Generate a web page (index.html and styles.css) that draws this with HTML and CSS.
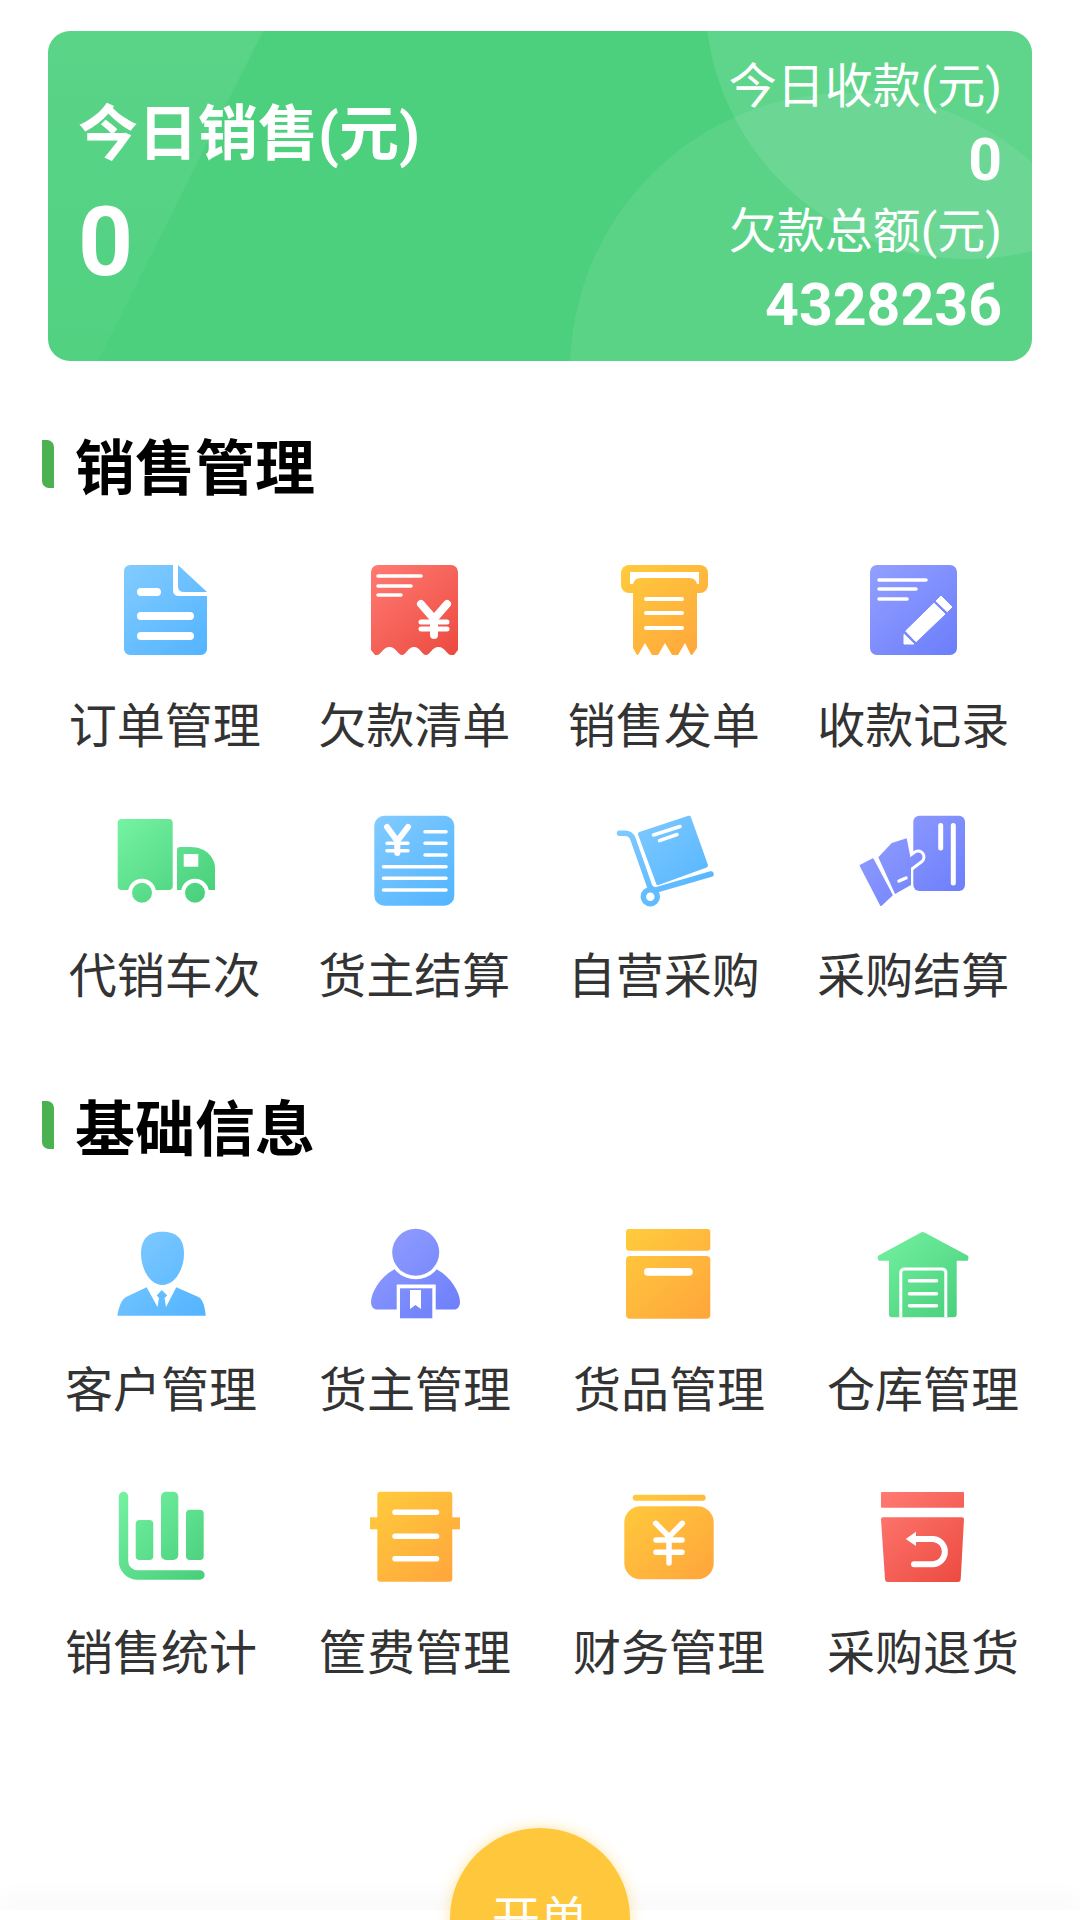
FILE: index.html
```html
<!DOCTYPE html>
<html lang="zh-CN">
<head>
<meta charset="utf-8">
<title>首页</title>
<link rel="stylesheet" href="styles.css">
</head>
<body>
<svg class="defs" width="0" height="0" aria-hidden="true">
  <defs>
    <linearGradient id="blue" gradientUnits="userSpaceOnUse" x1="10" y1="5" x2="90" y2="95"><stop offset="0" stop-color="#82CBFF"/><stop offset="1" stop-color="#52B4FF"/></linearGradient>
    <linearGradient id="red" gradientUnits="userSpaceOnUse" x1="10" y1="5" x2="90" y2="95"><stop offset="0" stop-color="#FF7A72"/><stop offset="1" stop-color="#EC4A40"/></linearGradient>
    <linearGradient id="orange" gradientUnits="userSpaceOnUse" x1="10" y1="5" x2="90" y2="95"><stop offset="0" stop-color="#FFCB3C"/><stop offset="1" stop-color="#FFA53C"/></linearGradient>
    <linearGradient id="indigo" gradientUnits="userSpaceOnUse" x1="10" y1="5" x2="90" y2="95"><stop offset="0" stop-color="#929FFF"/><stop offset="1" stop-color="#6C7EFB"/></linearGradient>
    <linearGradient id="green" gradientUnits="userSpaceOnUse" x1="10" y1="5" x2="90" y2="95"><stop offset="0" stop-color="#74F2A2"/><stop offset="1" stop-color="#48CE7A"/></linearGradient>
    <linearGradient id="band" x1="0" y1="0" x2="0" y2="1"><stop offset="0" stop-color="#fff" stop-opacity=".08"/><stop offset="1" stop-color="#fff" stop-opacity=".03"/></linearGradient>
  </defs>
</svg>
<div class="page">
  <section class="card">
    <svg class="card-bg" viewBox="0 0 984 330" aria-hidden="true">
      <path d="M0 0H215L50 330H0Z" fill="url(#band)"/>
      <circle cx="800" cy="340" r="278" fill="#fff" fill-opacity=".08"/>
      <circle cx="919" cy="-34" r="262" fill="#fff" fill-opacity=".11"/>
    </svg>
    <div class="card-left">
      <div class="card-title">今日销售(元)</div>
      <div class="card-big">0</div>
    </div>
    <div class="card-right">
      <div class="card-line">今日收款(元)</div>
      <div class="card-num">0</div>
      <div class="card-line">欠款总额(元)</div>
      <div class="card-num">4328236</div>
    </div>
  </section>

  <h2 class="heading heading-first"><span class="heading-bar"></span>销售管理</h2>
  <div class="grid grid-sales">
    <a class="item">
      <svg class="icon" viewBox="0 0 100 100"><path fill="url(#blue)" d="M14 5H57V30q0 6 6 6H91V89a6 6 0 0 1-6 6H14a6 6 0 0 1-6-6V11a6 6 0 0 1 6-6Z"/><path fill="url(#blue)" d="M62 5 91 32H68q-6 0-6-6Z"/><g fill="none" stroke="#fff" stroke-width="8" stroke-linecap="round"><path d="M25 32H41M25 56H74M25 76H74"/></g></svg>
      <span class="label">订单管理</span>
    </a>
    <a class="item">
      <svg class="icon" viewBox="0 0 100 100"><path fill="url(#red)" d="M13 5H86a7 7 0 0 1 7 7V90L89 95H86C82 95 80 87 73.500 87 67 87 65 95 61 95 57 95 55 87 49 87 43 87 41 95 37 95 33 95 31 87 24.500 87 18 87 16 95 12 95H10L6 90V12a7 7 0 0 1 7-7Z"/><g fill="none" stroke="#fff" stroke-width="3.500" stroke-linecap="round"><path d="M13 16H56M13 26H46M13 35H36"/><path stroke-width="5" d="M56 62H82M56 69H82"/><path stroke-width="8" d="M56 44 69 59 82 44M69 59V75"/></g></svg>
      <span class="label">欠款清单</span>
    </a>
    <a class="item">
      <svg class="icon" viewBox="0 0 100 100"><rect x="6" y="5" width="87" height="28" rx="8" fill="url(#orange)"/><path fill="#fff" d="M15 12H84V24H15Z"/><path fill="url(#orange)" d="M26 18H74q8 0 8 8V88L77 95H76L70 83 63 95H57L50 83 43 95H37L30 83 23 95H22L18 88V26q0-8 8-8Z"/><g fill="none" stroke="#fff" stroke-width="4" stroke-linecap="round"><path d="M31 39H67M31 53H67M31 68H67"/></g></svg>
      <span class="label">销售发单</span>
    </a>
    <a class="item">
      <svg class="icon" viewBox="0 0 100 100"><rect x="6" y="5" width="87" height="90" rx="7" fill="url(#indigo)"/><g fill="none" stroke="#fff" stroke-width="3.500" stroke-linecap="round"><path d="M15 20H62M15 29H52M15 39H43"/></g><g fill="#fff" stroke="#fff" stroke-width="1" stroke-linejoin="round"><path d="M77 36 88 47 83.300 51.700 72 41Z"/><path d="M70 43.300 81 54 52 81.700 41.700 71Z"/><path d="M40 74.300 50 84H40Z"/></g></svg>
      <span class="label">收款记录</span>
    </a>
    <a class="item">
      <svg class="icon" viewBox="0 0 100 100"><rect x="1.700" y="9" width="55" height="71" rx="4" fill="url(#green)"/><path fill="url(#green)" d="M61 40q0-3 3-3H75C90 37 99 48 99 58V80H61Z"/><rect x="67.700" y="44" width="14.600" height="12.700" fill="#fff"/><circle cx="26" cy="82.700" r="14" fill="#fff"/><circle cx="79" cy="82.700" r="14" fill="#fff"/><circle cx="26" cy="82.700" r="10" fill="url(#green)"/><circle cx="79" cy="82.700" r="10" fill="url(#green)"/></svg>
      <span class="label">代销车次</span>
    </a>
    <a class="item">
      <svg class="icon" viewBox="0 0 100 100"><rect x="9.300" y="5.700" width="80" height="90" rx="10" fill="url(#blue)"/><g fill="none" stroke="#fff" stroke-width="3.500" stroke-linecap="round"><path d="M60 21.700H81M60 33.300H81M60 45H81M18.500 56.700H81M18.500 68.300H81M18.500 80H81"/><path d="M22 33.300H43M22 40.700H43"/><path stroke-width="6" d="M22 17 32.300 31 43 17M32.300 31V43"/></g></svg>
      <span class="label">货主结算</span>
    </a>
    <a class="item">
      <svg class="icon" viewBox="0 0 100 100"><path fill="url(#blue)" stroke="url(#blue)" stroke-width="4" stroke-linejoin="round" d="M25 24 74 7.700 91 55.500 43 73Z"/><g fill="none" stroke="url(#blue)" stroke-width="5.500" stroke-linecap="round" stroke-linejoin="round"><path d="M4.500 23.300H10Q16 23.300 18 29L34.500 76Q37 81 42.700 79.500L96 64"/><circle cx="35.300" cy="86.700" r="7"/></g><g fill="none" stroke="#fff" stroke-width="3.500" stroke-linecap="round"><path d="M38.500 25 65 16.500M44.500 30.700 62 24.500"/></g></svg>
      <span class="label">自营采购</span>
    </a>
    <a class="item">
      <svg class="icon" viewBox="0 0 100 100"><rect x="49.300" y="5.700" width="51.700" height="75.300" rx="6" fill="url(#indigo)"/><g fill="none" stroke="#fff" stroke-width="5" stroke-linecap="round"><path d="M76.700 15.500V38M89.300 15.500V73"/></g><path fill="none" stroke="#fff" stroke-width="15" stroke-linecap="round" d="M42 56 54 47"/><path fill="url(#indigo)" d="M14.300 47.300 27.700 33 42.700 28.300 45 40 47 50 47 75 31 84Z"/><path fill="none" stroke="url(#indigo)" stroke-width="9" stroke-linecap="round" d="M42 56 54 47"/><path fill="none" stroke="#fff" stroke-width="3.500" stroke-linecap="round" d="M35 71 42 68"/><path fill="url(#indigo)" stroke="url(#indigo)" stroke-width="2" stroke-linejoin="round" d="M-3.300 55.700 8.700 49.300 27.700 85 17 95Z"/></svg>
      <span class="label">采购结算</span>
    </a>
  </div>

  <h2 class="heading heading-second"><span class="heading-bar"></span>基础信息</h2>
  <div class="grid grid-base">
    <a class="item">
      <svg class="icon" viewBox="0 0 100 100"><path fill="url(#blue)" d="M30 30C30 14 38 7.700 51.300 7.700 65 7.700 73 14 73 30 73 45 64 61 51.300 61 39 61 30 45 30 30Z"/><path fill="url(#blue)" d="M6.300 91.700C8 83 10 76 15 73L35.700 63.300 46.500 83 48 74 45.700 71.500 50.700 66 56.300 71.500 53.500 74 55 83 65.300 63.300 88 73.300C92 76 94 83 94.700 91.700Z"/></svg>
      <span class="label">客户管理</span>
    </a>
    <a class="item">
      <svg class="icon" viewBox="0 0 100 100"><path fill="url(#indigo)" d="M30 45C16 52 6 68 6 78 6 83 9 85.500 12 85.500H89C92 85.500 95 83 95 78 95 68 85 52 71 45Z"/><circle cx="50.700" cy="28.300" r="27" fill="#fff"/><circle cx="50.700" cy="28.300" r="23.500" fill="url(#indigo)"/><rect x="31.700" y="60.500" width="39" height="39" fill="#fff"/><rect x="35" y="64.300" width="32.300" height="30" fill="url(#indigo)"/><path fill="#fff" d="M45 66H56V85L50.500 81 45 85Z"/></svg>
      <span class="label">货主管理</span>
    </a>
    <a class="item">
      <svg class="icon" viewBox="0 0 100 100"><rect x="7" y="5" width="84.300" height="21.700" rx="3" fill="url(#orange)"/><rect x="7" y="32" width="84.300" height="62.700" rx="4" fill="url(#orange)"/><rect x="25" y="44" width="48.700" height="7.700" rx="3.800" fill="#fff"/></svg>
      <span class="label">货品管理</span>
    </a>
    <a class="item">
      <svg class="icon" viewBox="0 0 100 100"><path fill="url(#green)" d="M48 8.500Q49.700 7.300 51.500 8.500L94.500 31.500Q96.500 33 94.500 36.700H83.700V90.300a3 3 0 0 1-3 3H19a3 3 0 0 1-3-3V36.700H6Q3.500 34 5.500 31.500Z"/><g fill="none" stroke="#fff" stroke-linecap="round"><path stroke-width="3" stroke-linecap="butt" d="M27.800 93.300V49q0-4 4-4H68.800q4 0 4 4V93.300"/><path stroke-width="3.500" d="M36.500 56.700H63.500M36.500 69.700H63.500M36.500 81.700H63.500"/></g></svg>
      <span class="label">仓库管理</span>
    </a>
    <a class="item">
      <svg class="icon" viewBox="0 0 100 100"><path fill="none" stroke="url(#green)" stroke-width="9.400" stroke-linecap="round" d="M12.500 9.500V74a14 14 0 0 0 14 14H89"/><rect x="24.700" y="33" width="17.600" height="40" rx="4" fill="url(#green)"/><rect x="50" y="4.700" width="17.300" height="68.300" rx="5" fill="url(#green)"/><rect x="75" y="22.700" width="17.700" height="50.300" rx="4" fill="url(#green)"/></svg>
      <span class="label">销售统计</span>
    </a>
    <a class="item">
      <svg class="icon" viewBox="0 0 100 100"><rect x="12.300" y="4.700" width="75" height="90" rx="3" fill="url(#orange)"/><rect x="5" y="30.300" width="90" height="12" fill="url(#orange)"/><g fill="none" stroke="#fff" stroke-width="5.500" stroke-linecap="round"><path d="M30 25.300H71.500M30 49.300H71.500M30 71.700H71.500"/></g></svg>
      <span class="label">筐费管理</span>
    </a>
    <a class="item">
      <svg class="icon" viewBox="0 0 100 100"><rect x="13.700" y="7.700" width="73" height="6" rx="3" fill="url(#orange)"/><rect x="5.300" y="19.300" width="89.400" height="73" rx="16" fill="url(#orange)"/><g fill="none" stroke="#fff" stroke-width="5.500" stroke-linecap="round" stroke-linejoin="round"><path d="M36.700 36.300 50 49.700 63.300 36.300M50 49.700V76M37 53H63M37 65.300H63"/></g></svg>
      <span class="label">财务管理</span>
    </a>
    <a class="item">
      <svg class="icon" viewBox="0 0 100 100"><rect x="8" y="5" width="83" height="15.700" rx="1" fill="url(#red)"/><path fill="url(#red)" d="M10 30.300H89q2 0 2 2L87.700 92q0 3-3 3H15q-3 0-3-3L8 32.300q0-2 2-2Z"/><path fill="none" stroke="#fff" stroke-width="6" stroke-linecap="round" d="M40 52H60.300a12.700 12.700 0 0 1 0 25.300H41"/><path fill="#fff" d="M32.700 52 43 44.700V59Z"/></svg>
      <span class="label">采购退货</span>
    </a>
  </div>

  <footer class="tabbar">
    <div class="fab">开单</div>
  </footer>
</div>
</body>
</html>
```

FILE: styles.css
```css
* { box-sizing: border-box; }
html, body { margin: 0; padding: 0; background: #fff; }
body { font-family: Roboto, "Noto Sans CJK SC", sans-serif; }
.defs { position: absolute; }

.page {
  width: 1080px;
  height: 1920px;
  overflow: hidden;
  display: flex;
  flex-direction: column;
  padding-top: 31px;
}

.card {
  position: relative;
  flex: none;
  width: 984px;
  height: 330px;
  margin-left: 48px;
  border-radius: 22px;
  background: #4CD07D;
  overflow: hidden;
  color: #fff;
  display: flex;
  justify-content: space-between;
  padding: 20px 30px 0 30px;
}
.card-bg { position: absolute; left: 0; top: 0; width: 984px; height: 330px; }
.card-left, .card-right { position: relative; }
.card-left { padding-top: 54px; }
.card-title { font-size: 60px; line-height: 60px; font-weight: 700; }
.card-big { font-size: 96px; line-height: 96px; font-weight: 700; margin-top: 29px; }
.card-right { text-align: right; }
.card-line { font-size: 48px; line-height: 72.5px; }
.card-num { font-size: 59px; line-height: 72.5px; font-weight: 700; }

.heading {
  flex: none;
  margin: 0;
  display: flex;
  align-items: center;
  gap: 21px;
  height: 60px;
  padding-left: 42px;
  font-family: "Noto Sans CJK SC", sans-serif;
  font-size: 60px;
  line-height: 60px;
  font-weight: 700;
  color: #000;
}
.heading-first { margin-top: 73px; }
.heading-second { margin-top: 90px; }
.heading-bar {
  width: 12px;
  height: 48px;
  background: #4CB150;
  border-radius: 0 7px 0 7px;
}

.grid { flex: none; display: grid; }
.grid-sales {
  margin-top: 66px;
  padding-left: 40px;
  grid-template-columns: repeat(4, 249.5px);
  row-gap: 55px;
}
.grid-sales .icon { margin-left: 2px; }
.grid-base {
  margin-top: 69px;
  padding-left: 34px;
  grid-template-columns: repeat(4, 254px);
  row-gap: 68px;
}
.item {
  display: flex;
  flex-direction: column;
  align-items: center;
  gap: 32px;
  padding-bottom: 3px;
}
.icon { display: block; width: 100px; height: 100px; overflow: visible; }
.label {
  font-family: "Noto Sans CJK SC", sans-serif;
  font-size: 48px;
  line-height: 60px;
  color: #333;
  white-space: nowrap;
}

.tabbar {
  position: relative;
  flex: none;
  margin-top: auto;
  height: 10px;
  background: #fff;
  box-shadow: 0 -6px 30px rgba(0, 0, 0, .07);
}
.fab {
  position: absolute;
  left: 450px;
  top: -82px;
  width: 180px;
  height: 180px;
  border-radius: 50%;
  background: #FFC83C;
  box-shadow: 0 0 14px rgba(255, 200, 60, .45);
  padding-top: 57px;
  text-align: center;
  font-family: "Noto Sans CJK SC", sans-serif;
  font-size: 48px;
  line-height: 60px;
  color: #fff;
}
```
